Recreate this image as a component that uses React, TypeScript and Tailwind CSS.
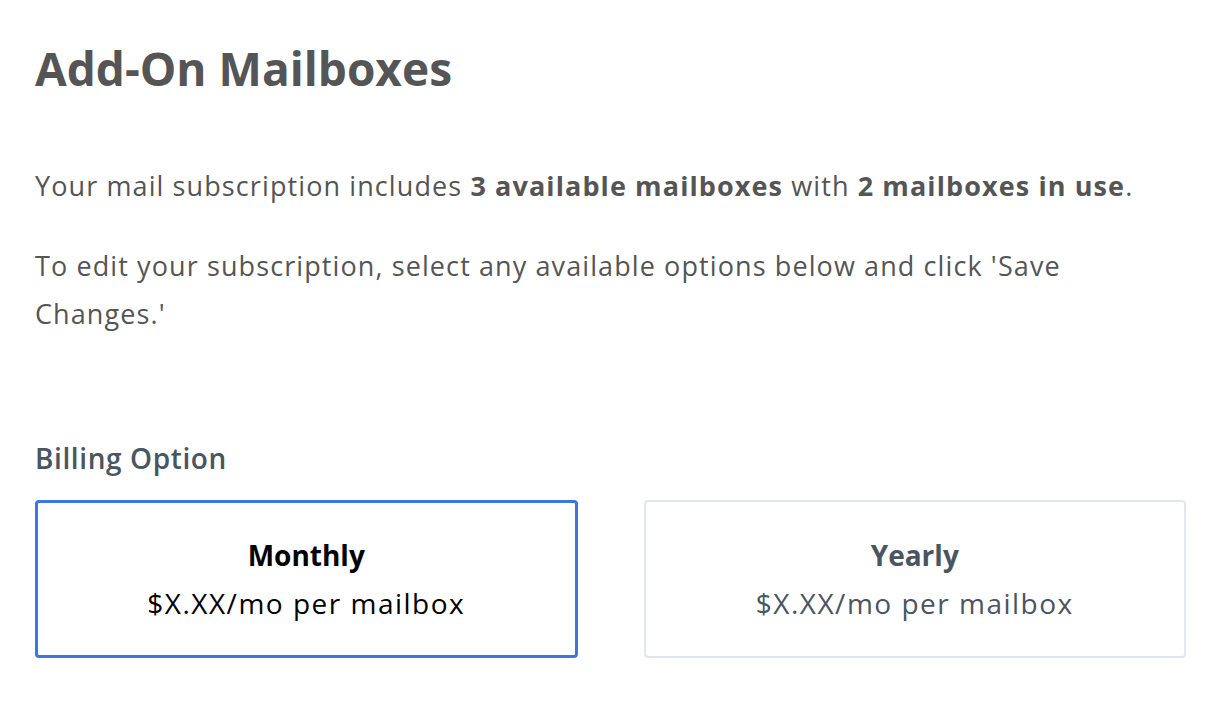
export default function App() {
  return (
    <div className="min-h-screen bg-white px-[35px] pt-[40px]" style={{ fontFamily: '"Open Sans", sans-serif' }}>
      <h1 className="text-[46px] font-bold leading-[56px] text-[#555555]">
        Add-On Mailboxes
      </h1>

      <div className="mt-[66px] w-[1151px] text-[27px] tracking-[1.1px] text-[#555555]">
        <p className="leading-[48px]">
          Your mail subscription includes <b className="font-bold">3 available mailboxes</b> with{' '}
          <b className="font-bold">2 mailboxes in use</b>.
        </p>
        <p className="mt-[32px] leading-[48px]">
          To edit your subscription, select any available options below and click 'Save Changes.'
        </p>
      </div>

      <h2 className="mt-[102px] text-[28px] font-semibold leading-[36px] tracking-[0.6px] text-[#4a5561]">Billing Option</h2>

      <div className="mt-[24px] grid grid-cols-2 gap-[66px] w-[1151px]">
        <button className="flex h-[158px] flex-col items-center justify-center rounded-[4px] border-[3px] border-[#3a78e0] bg-white text-black">
          <span className="text-[28px] font-bold leading-[48px]">Monthly</span>
          <span className="text-[28px] leading-[48px] tracking-[1.5px]">$X.XX/mo per mailbox</span>
        </button>
        <button className="flex h-[158px] flex-col items-center justify-center rounded-[4px] border-2 border-[#e3e6ea] bg-white text-[#4a5561]">
          <span className="text-[28px] font-bold leading-[48px]">Yearly</span>
          <span className="text-[28px] leading-[48px] tracking-[1.5px]">$X.XX/mo per mailbox</span>
        </button>
      </div>
    </div>
  );
}
